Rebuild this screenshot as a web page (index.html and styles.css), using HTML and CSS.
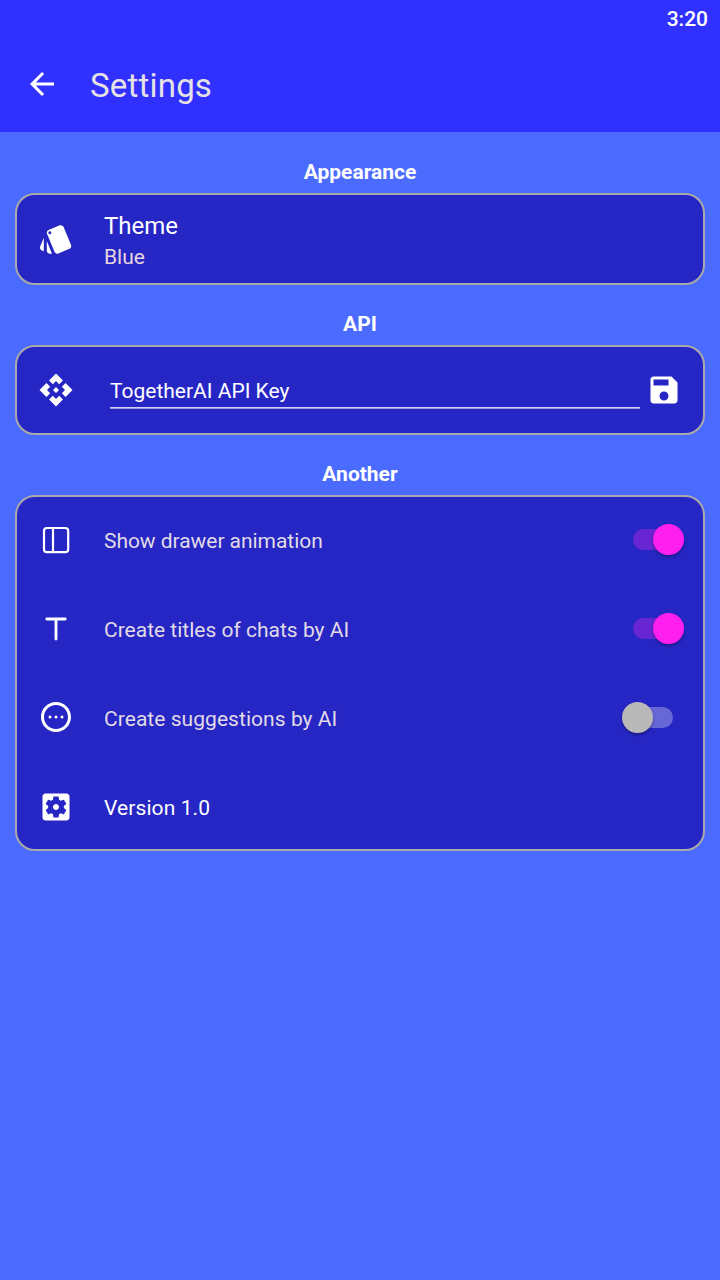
FILE: index.html
```html
<!DOCTYPE html>
<html lang="en">
<head>
<meta charset="utf-8">
<title>Settings</title>
<link rel="stylesheet" href="styles.css">
</head>
<body>
<header class="header">
  <div class="status">3:20</div>
  <div class="toolbar">
    <svg class="icon" viewBox="0 0 24 24"><path d="M20 11H7.83l5.59-5.59L12 4l-8 8 8 8 1.41-1.41L7.83 13H20v-2z"/></svg>
    <h1 class="title">Settings</h1>
  </div>
</header>
<main class="content">
  <h2 class="heading">Appearance</h2>
  <section class="card card-theme">
    <svg class="icon" viewBox="0 0 24 24"><path d="M2.53 19.65l1.34.56v-9.03l-2.43 5.86c-.41 1.02.08 2.19 1.09 2.61zm19.5-3.7L17.07 3.98c-.31-.75-1.04-1.21-1.81-1.23-.26 0-.53.04-.79.15L7.1 5.95c-.75.31-1.21 1.03-1.23 1.8-.01.27.04.54.15.8l4.96 11.97c.31.76 1.05 1.22 1.83 1.23.26 0 .52-.05.77-.15l7.36-3.05c1.02-.42 1.51-1.59 1.09-2.6zM7.88 8.75c-.55 0-1-.45-1-1s.45-1 1-1 1 .45 1 1-.45 1-1 1zm-2 11c0 1.1.9 2 2 2h1.45l-3.45-8.34v6.34z"/></svg>
    <div class="theme-text">
      <div class="theme-name">Theme</div>
      <div class="theme-value">Blue</div>
    </div>
  </section>
  <h2 class="heading">API</h2>
  <section class="card card-api">
    <svg class="icon" viewBox="0 0 24 24"><path d="M14 12l-2 2-2-2 2-2 2 2zm-2-6l2.12 2.12 2.5-2.5L12 1 7.38 5.62l2.5 2.5L12 6zm-6 6l2.12-2.12-2.5-2.5L1 12l4.62 4.62 2.5-2.5L6 12zm12 0l-2.12 2.12 2.5 2.5L23 12l-4.62-4.62-2.5 2.5L18 12zm-6 6l-2.12-2.12-2.5 2.5L12 23l4.62-4.62-2.5-2.5L12 18z"/></svg>
    <div class="field">TogetherAI API Key</div>
    <svg class="icon" viewBox="0 0 24 24"><path d="M17 3H5c-1.11 0-2 .9-2 2v14c0 1.1.89 2 2 2h14c1.1 0 2-.9 2-2V7l-4-4zm-5 16c-1.66 0-3-1.34-3-3s1.34-3 3-3 3 1.34 3 3-1.34 3-3 3zm3-10H5V5h10v4z"/></svg>
  </section>
  <h2 class="heading">Another</h2>
  <section class="card card-list">
    <div class="row">
      <svg class="icon line" viewBox="0 0 36 36"><rect x="6" y="6" width="24.200" height="24.200" rx="3"/><path d="M15 6v24"/></svg>
      <span class="label drawer">Show drawer animation</span>
      <span class="switch on"><span class="thumb"></span></span>
    </div>
    <div class="row">
      <svg class="icon line tee" viewBox="0 0 36 36"><path d="M8.800 8H27.200M18 8V28"/></svg>
      <span class="label">Create titles of chats by AI</span>
      <span class="switch on"><span class="thumb"></span></span>
    </div>
    <div class="row">
      <svg class="icon bubble" viewBox="0 0 24 24"><path d="M12 2C6.480 2 2 6.480 2 12s4.480 10 10 10 10-4.480 10-10S17.520 2 12 2zm0 18c-4.420 0-8-3.580-8-8s3.580-8 8-8 8 3.580 8 8-3.580 8-8 8z"/><circle cx="8" cy="12" r="1"/><circle cx="12" cy="12" r="1"/><circle cx="16" cy="12" r="1"/></svg>
      <span class="label suggestions">Create suggestions by AI</span>
      <span class="switch"><span class="thumb"></span></span>
    </div>
    <div class="row">
      <svg class="icon" viewBox="0 0 24 24"><path d="M12 10c-1.100 0-2 .9-2 2s.9 2 2 2 2-.9 2-2-.9-2-2-2zm7-7H5c-1.110 0-2 .9-2 2v14c0 1.100.89 2 2 2h14c1.110 0 2-.9 2-2V5c0-1.100-.89-2-2-2zm-1.750 9c0 .23-.02.46-.05.68l1.480 1.160c.13.11.17.3.08.45l-1.400 2.420c-.09.15-.27.21-.43.15l-1.740-.7c-.36.28-.76.51-1.180.69l-.26 1.850c-.03.17-.18.3-.35.3h-2.800c-.17 0-.32-.13-.35-.29l-.26-1.850c-.43-.18-.82-.41-1.180-.69l-1.740.7c-.16.06-.34 0-.43-.15l-1.400-2.420c-.09-.15-.05-.34.08-.45l1.480-1.160c-.03-.23-.05-.46-.05-.69 0-.23.02-.46.05-.68l-1.480-1.160c-.13-.11-.17-.3-.08-.45l1.400-2.420c.09-.15.27-.21.43-.15l1.740.7c.36-.28.76-.51 1.180-.69l.26-1.850c.03-.17.18-.3.35-.3h2.800c.17 0 .32.13.35.29l.26 1.850c.43.18.82.41 1.180.69l1.740-.7c.16-.06.34 0 .43.15l1.400 2.420c.09.15.05.34-.08.45l-1.480 1.160c.03.23.05.46.05.69z"/></svg>
      <span class="label version">Version 1.0</span>
    </div>
  </section>
</main>
</body>
</html>
```
FILE: styles.css
```css
* { box-sizing: border-box; }
body {
  margin: 0;
  min-height: 1280px;
  background: #4b6bff;
  color: #fff;
  font-family: Roboto, sans-serif;
}
.header { height: 132px; background: #3131ff; }
.status {
  height: 36px;
  padding-right: 12px;
  font-size: 21px;
  font-weight: 500;
  line-height: 38px;
  text-align: right;
}
.toolbar { height: 96px; display: flex; align-items: center; padding-left: 24px; }
.title {
  margin: 2px 0 0 30px;
  color: #e6e1e5;
  font-size: 33px;
  font-weight: 400;
  letter-spacing: 0.2px;
}
.icon { width: 36px; height: 36px; flex: none; fill: #fff; }
.line { fill: none; stroke: #fff; stroke-width: 2.2; stroke-linecap: round; }
.tee { stroke-width: 2.8; }
.bubble { margin-bottom: 2px; }
.content { padding: 0 15px; }
.heading {
  height: 60px;
  margin: 0;
  padding-top: 25px;
  font-size: 21px;
  font-weight: 700;
  line-height: 28px;
  text-align: center;
}
.heading:first-child { height: 61px; padding-top: 26px; }
.card {
  border: 2px solid #a9a9ab;
  border-radius: 20px;
  background: #2626c4;
}
.card-theme { height: 92px; display: flex; align-items: center; padding-left: 21px; }
.theme-text { margin-left: 30px; padding-top: 4px; }
.theme-name { font-size: 24px; line-height: 32px; }
.theme-value { color: #e6d5df; font-size: 21px; line-height: 30px; }
.card-api { height: 90px; display: flex; align-items: center; padding: 0 21px; }
.field {
  flex: 1;
  height: 37px;
  margin: 0 6px 1px 36px;
  border-bottom: 1px solid #d2d1f2;
  box-shadow: 0 1px #9a9ae2;
  font-size: 21px;
  line-height: 41px;
}
.card-list { height: 356px; padding: 0 19px 0 21px; }
.row { height: 89px; display: flex; align-items: center; padding-bottom: 4px; }
.label { flex: 1; margin-left: 30px; padding-top: 2px; color: #e0dbe6; font-size: 21px; }
.drawer { letter-spacing: -0.05px; }
.suggestions { letter-spacing: 0.05px; }
.version { color: #fff; letter-spacing: 0.1px; }
.switch {
  width: 40px;
  height: 21px;
  margin-right: 11px;
  border-radius: 11px;
  background: #6767d5;
}
.switch.on { background: #6826d2; }
.thumb {
  display: block;
  width: 31px;
  height: 31px;
  margin: -5px 0 0 -11px;
  border-radius: 50%;
  background: #b9b9b9;
  box-shadow: 0 2px 3px rgba(0, 0, 0, 0.3);
}
.switch.on .thumb { margin-left: 20px; background: #ff1fee; }
```
